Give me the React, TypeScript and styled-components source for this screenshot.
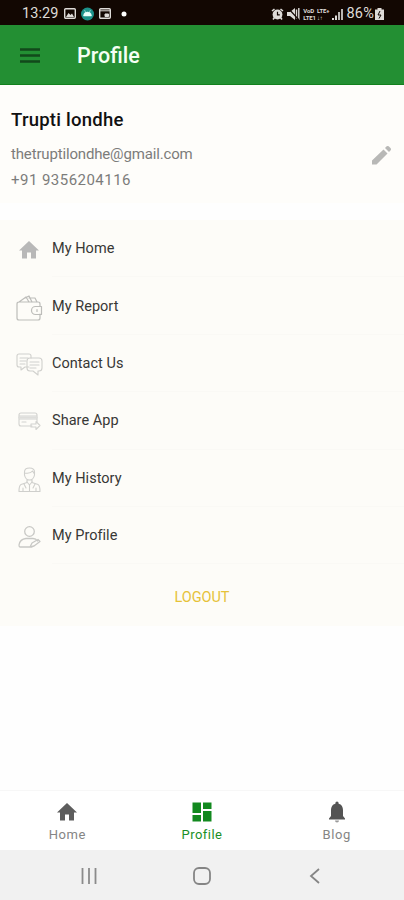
import React from "react";
import styled, { createGlobalStyle } from "styled-components";

const GlobalStyle = createGlobalStyle`
  * { box-sizing: border-box; }
  body { margin: 0; background: #fff; font-family: Roboto, "Liberation Sans", sans-serif; }
  svg { display: block; flex: none; }
`;

const Screen = styled.div`
  width: 404px;
  height: 900px;
  display: flex;
  flex-direction: column;
  background: #fefefe;
  overflow: hidden;
`;

const StatusBar = styled.div`
  height: 25px;
  flex: none;
  background: #120702;
  display: flex;
  justify-content: space-between;
  align-items: center;
  padding: 2px 20px 0 22px;
  color: #dedbd8;
`;

const StatusGroup = styled.div<{ $gap: number }>`
  display: flex;
  align-items: center;
  gap: ${(p) => p.$gap}px;
`;

const StatusText = styled.span<{ $spacing: number }>`
  font-size: 14.5px;
  line-height: 20px;
  letter-spacing: ${(p) => p.$spacing}px;
`;

const NetworkLabel = styled.span`
  display: flex;
  flex-direction: column;
  font-size: 6px;
  font-weight: 700;
  line-height: 7px;
  letter-spacing: -0.1px;
`;

const AppBar = styled.header`
  height: 60px;
  flex: none;
  background: #238f33;
  border-bottom: 1px solid #12801d;
  display: flex;
  align-items: center;
  gap: 37px;
  padding: 2px 20px 0;
`;

const Title = styled.h1`
  margin: 0;
  color: #f4fff4;
  font-size: 21.5px;
  line-height: 28px;
  font-weight: 500;
  letter-spacing: 0;
`;

const UserPanel = styled.section`
  height: 118px;
  flex: none;
  background: #fefdfa;
  display: flex;
  justify-content: space-between;
  padding: 22px 12px 0 11px;
`;

const UserName = styled.h2`
  margin: 0 0 9px;
  color: #111;
  font-size: 18.5px;
  line-height: 26px;
  font-weight: 500;
  letter-spacing: 0.25px;
`;

const UserDetail = styled.p<{ $spacing: number }>`
  margin: 0;
  color: #7c7c7a;
  font-size: 15px;
  line-height: 25.5px;
  letter-spacing: ${(p) => p.$spacing}px;
`;

const EditButton = styled.div`
  padding-top: 38px;
`;

const MenuPanel = styled.section`
  flex: none;
  margin-top: 17px;
  height: 406px;
  background: #fdfcf8;
`;

const MenuRow = styled.div`
  height: 57.4px;
  display: flex;
  align-items: center;
  gap: 8px;
  padding-left: 14px;
`;

const MenuIcon = styled.div`
  width: 30px;
  display: flex;
  justify-content: center;
  padding-top: 3px;
`;

const MenuLabel = styled.div`
  flex: 1;
  height: 100%;
  border-bottom: 1px solid #faf9f5;
  display: flex;
  align-items: center;
  padding-top: 1px;
  color: #373735;
  font-size: 14.5px;
  letter-spacing: 0.03px;
`;

const Logout = styled.div`
  height: 61px;
  padding-top: 5px;
  display: flex;
  align-items: center;
  justify-content: center;
  color: #e6c238;
  font-size: 14.5px;
  letter-spacing: -0.05px;
`;

const TabBar = styled.nav`
  margin-top: auto;
  height: 60px;
  flex: none;
  border-top: 1px solid #f7f7f7;
  background: #fff;
  display: grid;
  grid-template-columns: repeat(3, 1fr);
`;

const Tab = styled.div<{ $active?: boolean }>`
  display: flex;
  flex-direction: column;
  align-items: center;
  padding-top: 9px;
  gap: 2px;
  color: ${(p) => (p.$active ? "#1a8f27" : "#858585")};
  font-size: 13px;
  line-height: 18px;
  letter-spacing: ${(p) => (p.$active ? 0.45 : 0.6)}px;
`;

const SystemBar = styled.div`
  height: 50px;
  flex: none;
  background: #f1f1f1;
  display: flex;
  align-items: center;
  justify-content: space-between;
  padding: 1px 80px 0 80px;
`;

const line = { fill: "none", strokeLinecap: "round", strokeLinejoin: "round" } as const;

const HomeGlyph = ({ color, size = 24 }: { color: string; size?: number }) => (
  <svg width={size} height={size} viewBox="0 0 24 24" fill={color}>
    <path d="M10 20.500v-6h4v6h5v-8h3L12 3 2 12.500h3v8z" />
  </svg>
);

const WalletIcon = () => (
  <svg width="27" height="28" viewBox="0 0 27 28" {...line} stroke="#bdbdba" strokeWidth="1.2">
    <path d="M24 12V10q0-2-2-2H3q-2 0-2 2v14q0 2 2 2h19q2 0 2-2v-4M3 8l7-5 3 5M9 4l4-2 3 6M13 4h6l2 4" />
    <path d="M25.5 12.5h-6a4 4 0 0 0 0 8h6zM21 15.5v2" />
  </svg>
);

const ChatIcon = () => (
  <svg width="27" height="24" viewBox="0 0 27 24" {...line} stroke="#d0d0cd" strokeWidth="1.1">
    <path d="M13 14H9l-4 3v-3H3q-2 0-2-2V3q0-2 2-2h10q2 0 2 2v2M4 5h8M4 8h6M4 11h5" />
    <path d="M14 5h9q3 0 3 3v7q0 3-3 3h-1v4l-5-4h-3q-3 0-3-3V8q0-3 3-3zM14 9h9M14 12h9M14 15h6" />
  </svg>
);

const CardIcon = () => (
  <svg width="23" height="20" viewBox="0 0 23 20" {...line} stroke="#d2d2cf" strokeWidth="1.1">
    <path d="M14 14H3q-2 0-2-2V3q0-2 2-2h14q2 0 2 2v7M1 4h18M1 7h18M4 10h4" />
    <path d="M1 5.5h18" strokeWidth="2" stroke="#dededb" />
    <path d="M13 12h5V9.5l4 4-4 4V15h-5z" />
  </svg>
);

const ClerkIcon = () => (
  <svg width="23" height="26" viewBox="0 0 23 26" {...line} stroke="#cfcfcc" strokeWidth="1.1">
    <path d="M6.500 7V5q0-4 5-4t5 4v3q-1 5-5 5t-5-5zM6.500 6q6 1 8-2l2 3M9 12.500v3l-6 2q-2 1-2 7h21q0-6-2-7l-6-2v-3" />
    <path d="m9 15 2.500 3 2.500-3M11.500 18v6M6 17l2 4M17 17l-2 4M5 21v3M18 21v3" />
  </svg>
);

const PersonIcon = () => (
  <svg width="23" height="24" viewBox="0 0 23 24" {...line} stroke="#c8c8c5" strokeWidth="1.3">
    <circle cx="11.500" cy="6.500" r="4.800" />
    <path d="M14 22H2q-1 0-1-2 1-6 7-6.500h7q3 0 4.500 2.500M12 22l2-4 6-3.500 2 2-6 4.500z" />
  </svg>
);

const menu = [
  { label: "My Home", icon: <HomeGlyph color="#b8b8b8" /> },
  { label: "My Report", icon: <WalletIcon /> },
  { label: "Contact Us", icon: <ChatIcon /> },
  { label: "Share App", icon: <CardIcon /> },
  { label: "My History", icon: <ClerkIcon /> },
  { label: "My Profile", icon: <PersonIcon /> },
];

export default function App() {
  return (
    <Screen>
      <GlobalStyle />
      <StatusBar>
        <StatusGroup $gap={5}>
          <StatusText $spacing={0.1}>13:29</StatusText>
          <svg width="12" height="11" viewBox="0 0 12 11">
            <rect x="0.700" y="0.700" width="10.600" height="9.600" rx="1" fill="none" stroke="#dedbd8" strokeWidth="1.400" />
            <path d="M2 9l2.500-4 2 2L8 5.500 10 9z" fill="#dedbd8" />
          </svg>
          <svg width="13" height="14" viewBox="0 0 13 14">
            <circle cx="6.500" cy="7" r="6.500" fill="#1c918a" />
            <path d="M2.500 9a4 4 0 0 1 8 0zM3.500 3l1.500 3M9.500 3 8 6" fill="#e8fffb" stroke="#e8fffb" strokeWidth="0.500" />
          </svg>
          <svg width="12" height="11" viewBox="0 0 12 11">
            <rect x="0.700" y="0.700" width="10.600" height="9.600" rx="1" fill="none" stroke="#dedbd8" strokeWidth="1.400" />
            <path d="M1 2.800h10M6 6h3.500v2.500H6z" fill="#dedbd8" stroke="#dedbd8" />
          </svg>
          <svg width="15" height="6" viewBox="0 0 15 6"><circle cx="8" cy="3" r="2.500" fill="#fff" /></svg>
        </StatusGroup>
        <StatusGroup $gap={3}>
          <svg width="13" height="12" viewBox="0 0 13 12">
            <circle cx="6.500" cy="6.500" r="4.900" fill="#dedbd8" />
            <path d="M1 3l2.500-2M12 3 9.500 1M2 11.500l1.500-2M11 11.500l-1.500-2" stroke="#dedbd8" strokeWidth="1.600" />
            <path d="M6.500 3.800v3h2.300" fill="none" stroke="#120702" strokeWidth="1.200" />
          </svg>
          <svg width="13" height="12" viewBox="0 0 13 12">
            <path d="M0 4h3l5-4v12L3 8H0z" fill="#dedbd8" />
            <path d="M9.500 1.500v9M11.800 0v12" fill="none" stroke="#dedbd8" strokeWidth="1.400" />
            <path d="M1 0l11 12" stroke="#120702" strokeWidth="1.200" />
          </svg>
          <StatusGroup $gap={1}>
            <NetworkLabel><span>VoD</span><span>LTE1</span></NetworkLabel>
            <NetworkLabel><span>LTE+</span><span>↓↑</span></NetworkLabel>
          </StatusGroup>
          <svg width="11" height="12" viewBox="0 0 11 12" fill="#dedbd8">
            <path d="M0 10h2v2H0zM3 7.500h2V12H3z" />
            <path d="M6 4h2v8H6zM9 1h2v11H9z" fill="#b9b6b3" />
          </svg>
          <StatusGroup $gap={1}>
            <StatusText $spacing={0.2}>86%</StatusText>
            <svg width="9" height="12" viewBox="0 0 9 12">
              <path d="M2.500 0h4v1.500H9V12H0V1.500h2.500z" fill="#dedbd8" />
              <path d="M5 3 3 7h3L4 10.500" fill="none" stroke="#120702" />
            </svg>
          </StatusGroup>
        </StatusGroup>
      </StatusBar>
      <AppBar>
        <svg width="20" height="15" viewBox="0 0 20 15" stroke="#12491b" strokeWidth="2.400">
          <path d="M0 1.500h20M0 7.500h20M0 13.500h20" />
        </svg>
        <Title>Profile</Title>
      </AppBar>
      <UserPanel>
        <div>
          <UserName>Trupti londhe</UserName>
          <UserDetail $spacing={-0.16}>thetruptilondhe@gmail.com</UserDetail>
          <UserDetail $spacing={0.47}>+91 9356204116</UserDetail>
        </div>
        <EditButton>
          <svg width="21" height="21" viewBox="0 0 21 21" fill="#b8b8b6">
            <path d="M1 15.500 12.500 4.500l4 4L5.500 19.500H1zM14 3l1.700-1.700q1-.8 2 0l2 2q.8 1 0 2L18 7z" />
          </svg>
        </EditButton>
      </UserPanel>
      <MenuPanel>
        {menu.map((item) => (
          <MenuRow key={item.label}>
            <MenuIcon>{item.icon}</MenuIcon>
            <MenuLabel>{item.label}</MenuLabel>
          </MenuRow>
        ))}
        <Logout>LOGOUT</Logout>
      </MenuPanel>
      <TabBar>
        <Tab>
          <HomeGlyph color="#5d5d5d" />
          Home
        </Tab>
        <Tab $active>
          <svg width="24" height="24" viewBox="0 0 24 24" fill="#12891f">
            <path d="M2.500 2.500h8.500v10.500H2.500zM2.500 15h8.500v6.500H2.500zM13 2.500h8.500V9H13zM13 11h8.500v10.500H13z" />
          </svg>
          Profile
        </Tab>
        <Tab>
          <svg width="24" height="24" viewBox="0 0 24 24" fill="#545454">
            <path d="M12 1.500a1.600 1.600 0 0 0-1.600 1.600v.6C7.300 4.400 6 7 6 10v6l-2 2.500V19.500h16v-1L18 16v-6c0-3-1.300-5.600-4.400-6.300v-.6A1.600 1.600 0 0 0 12 1.500z" />
            <path d="M10 20.500h4a2 2 0 0 1-4 0z" fill="#999" />
          </svg>
          Blog
        </Tab>
      </TabBar>
      <SystemBar>
        <svg width="18" height="16" viewBox="0 0 18 16" stroke="#8b8b8b" strokeWidth="1.800">
          <path d="M2.500 0v16M9 0v16M15.500 0v16" />
        </svg>
        <svg width="18" height="18" viewBox="0 0 18 18" fill="none" stroke="#858585" strokeWidth="1.800">
          <rect x="1" y="1" width="16" height="16" rx="5" />
        </svg>
        <svg width="18" height="16" viewBox="0 0 18 16" fill="none" stroke="#858585" strokeWidth="1.800">
          <path d="M13 1 5 8l8 7" />
        </svg>
      </SystemBar>
    </Screen>
  );
}
